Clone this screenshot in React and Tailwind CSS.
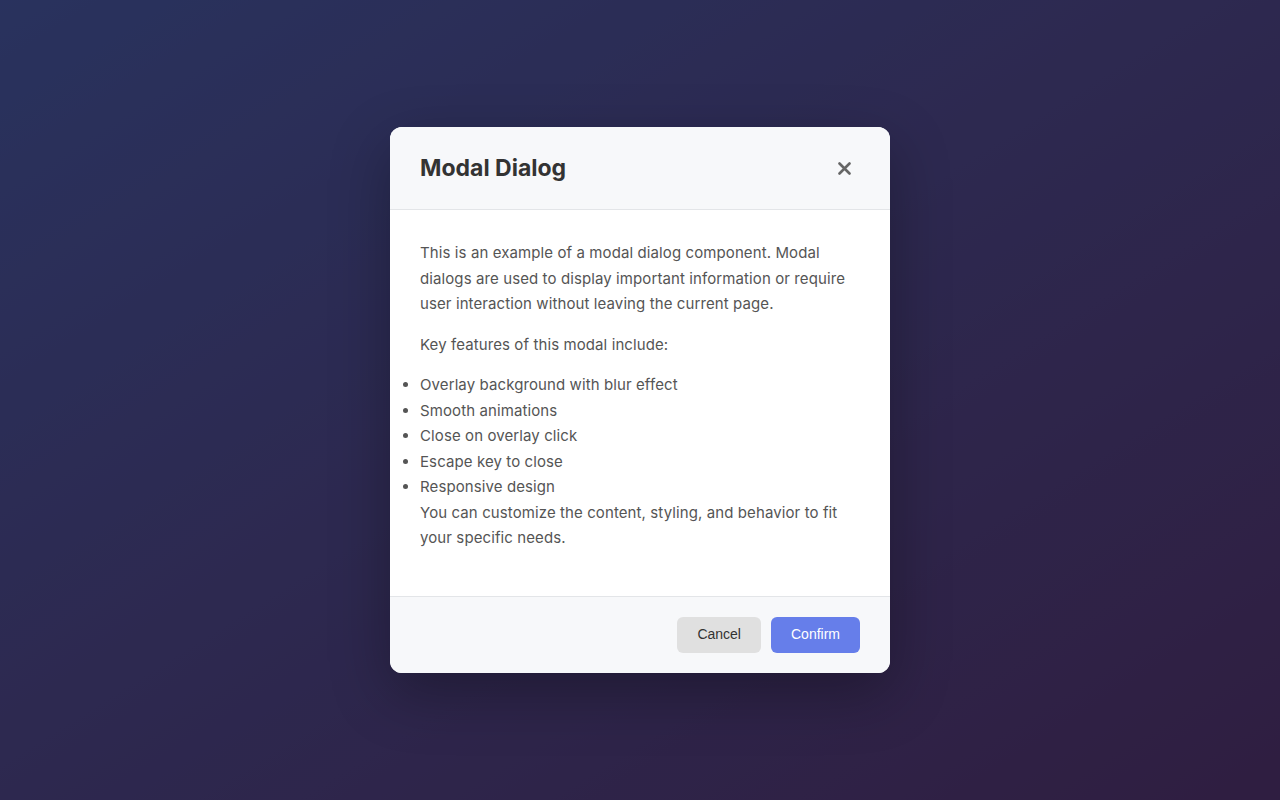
const features = [
  'Overlay background with blur effect',
  'Smooth animations',
  'Close on overlay click',
  'Escape key to close',
  'Responsive design',
];

const App = () => {
  return (
    <div className="relative flex h-[800px] w-full items-center justify-center bg-gradient-to-br from-[#667eea] to-[#764ba2] font-['Inter',sans-serif]">
      <div className="absolute inset-0 bg-black/60" />
      <div className="relative w-[500px] overflow-hidden rounded-xl bg-white shadow-[0_20px_60px_rgba(0,0,0,0.3)]">
        <div className="flex items-center justify-between border-b border-[#e3e5e8] bg-[#f7f8fa] px-[30px] py-6">
          <h2 className="text-[23px] font-bold leading-[34px] text-[#333]">Modal Dialog</h2>
          <button className="flex h-8 w-8 items-center justify-center text-[#666]" aria-label="Close">
            <svg width="13" height="13" viewBox="0 0 13 13" fill="none">
              <path d="M1.5 1.5L11.5 11.5M11.5 1.5L1.5 11.5" stroke="currentColor" strokeWidth="2.6" strokeLinecap="round" />
            </svg>
          </button>
        </div>

        <div className="p-[30px] text-[15px] leading-[25.5px] tracking-[0.1px] text-[#555]">
          <p className="mb-[15px]">
            This is an example of a modal dialog component. Modal dialogs are used to display important information or require user interaction without leaving the current page.
          </p>
          <p className="mb-[15px]">Key features of this modal include:</p>
          <ul className="list-disc">
            {features.map((f) => (
              <li key={f} className="marker:text-[#555]">{f}</li>
            ))}
          </ul>
          <p className="mb-[15px]">
            You can customize the content, styling, and behavior to fit your specific needs.
          </p>
        </div>

        <div className="flex justify-end gap-[10px] border-t border-[#e3e5e8] bg-[#f7f8fa] px-[30px] py-5 font-['Liberation_Sans',sans-serif]">
          <button className="h-9 rounded-md bg-[#e0e0e0] px-5 text-[14px] text-[#333]">Cancel</button>
          <button className="h-9 rounded-md bg-[#667eea] px-5 text-[14px] text-white">Confirm</button>
        </div>
      </div>
    </div>
  );
};

export default App;
